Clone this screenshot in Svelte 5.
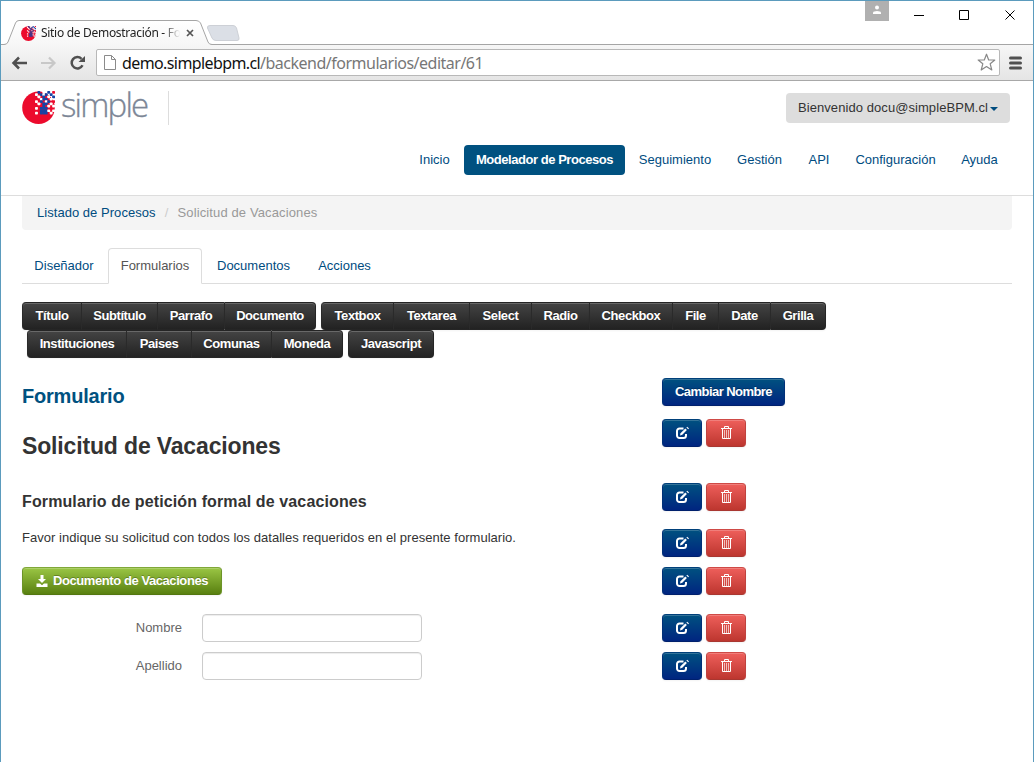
<script>
  let user = "docu@simpleBPM.cl";
  let nombre = $state("");
  let apellido = $state("");
  let activeTab = $state("Formularios");

  const menu = [
    { label: "Inicio", width: 55 },
    { label: "Modelador de Procesos", width: 161, active: true },
    { label: "Seguimiento", width: 96 },
    { label: "Gestión", width: 69 },
    { label: "API", width: 46 },
    { label: "Configuración", width: 103 },
    { label: "Ayuda", width: 61 },
  ];

  const tabs = [
    { label: "Diseñador", width: 84 },
    { label: "Formularios", width: 94 },
    { label: "Documentos", width: 99 },
    { label: "Acciones", width: 79 },
  ];

  const toolRows = [
    [
      [["Título", 59], ["Subtítulo", 76], ["Parrafo", 67], ["Documento", 92]],
      [["Textbox", 72], ["Textarea", 76], ["Select", 62], ["Radio", 58], ["Checkbox", 83], ["File", 46], ["Date", 52], ["Grilla", 56]],
    ],
    [
      [["Instituciones", 99], ["Paises", 65], ["Comunas", 80], ["Moneda", 72]],
      [["Javascript", 86]],
    ],
  ];

  // pixels that scatter off the globe, one letter per colour
  const pixels = [
    " b w b r",
    "w bwb b ",
    " w b w b",
    "  wbb w ",
    "w b wb r",
    " w bb w ",
    "   b w w",
    "w bbb  ",
    "  bbbw w",
    "w bbb w ",
  ];
  const pixelColors = { b: "#1644a5", r: "#ec0b2d", w: "#fff" };
</script>

{#snippet globe(size)}
  <svg width={size} height={size} viewBox="0 0 33 33">
    <circle cx="16.5" cy="16.7" r="16.3" fill="#ec0b2d" />
    <path d="M25 0H33V9L30.500 8L28 5L25 3Z" fill="#fff" />
    {#each pixels as line, y}
      {#each line.split("") as c, x}
        {#if c !== " "}
          <rect x={13 + x * 2.45} y={y * 2.3} width="2.9" height="2.7" rx="0.7" fill={pixelColors[c]} />
        {/if}
      {/each}
    {/each}
  </svg>
{/snippet}

{#snippet actions()}
  <div class="actions">
    <button class="btn primary icon" aria-label="Editar">
      <svg width="14" height="14" viewBox="0 0 14 14" fill="none">
        <path d="M8.500 2.500H4.500A2.500 2.500 0 0 0 2 5V9.500A2.500 2.500 0 0 0 4.500 12H8.500A2.500 2.500 0 0 0 11 9.500V8" stroke="#fff" stroke-width="2" />
        <path d="M5 9.500L5.500 7.200L10.300 2.400L11.900 4L7.300 8.700Z" fill="#fff" />
        <path d="M11.400 1.500L12.200 .7L14 2.500L13.200 3.300Z" fill="#fff" />
      </svg>
    </button>
    <button class="btn danger icon" aria-label="Eliminar">
      <svg width="14" height="14" viewBox="0 0 14 14" fill="none" stroke="#fff">
        <path d="M2 2.500H13M5.500 2V.5H9.500V2M3.500 3V12.500H11.500V3" />
        <path d="M5.500 4V12M7.500 4V12M9.500 4V12" opacity=".65" />
      </svg>
    </button>
  </div>
{/snippet}

<div class="window">
  <div class="titlebar">
    <div class="tab">
      <svg class="tab-shape" width="240" height="26" viewBox="0 0 240 26">
        <defs>
          <linearGradient id="tabfill" x1="0" y1="0" x2="0" y2="1">
            <stop offset="0" stop-color="#fff" />
            <stop offset="1" stop-color="#f6f6f6" />
          </linearGradient>
        </defs>
        <path d="M0 24.500H3Q6 24.500 7 22L14.500 3Q15.500 .5 18 .5H195Q198 .5 199.500 3L207 22Q208 24.500 211 24.500V26H0Z" fill="url(#tabfill)" />
        <path d="M0 24.500H3Q6 24.500 7 22L14.500 3Q15.500 .5 18 .5H195Q198 .5 199.500 3L207 22Q208 24.500 211 24.500H240" fill="none" stroke="#a5a5a5" />
        <path d="M209 5.500H232Q234.500 5.500 235.500 8L238 18Q238.500 20.500 236 20.500H215Q212 20.500 211 18L206.500 8Q206 5.500 209 5.500Z" fill="#dbdfe6" stroke="#cdd0d6" />
      </svg>
      {@render globe(15)}
      <span class="tab-title">Sitio de Demostración - Fo</span>
      <svg class="tab-close" width="8" height="8" viewBox="0 0 8 8"><path d="M1 1L7 7M7 1L1 7" stroke="#555" stroke-width="1.700" /></svg>
    </div>
    <div class="profile">
      <svg width="10" height="10" viewBox="0 0 10 10" fill="#fff"><circle cx="5" cy="2.500" r="2" /><path d="M1 9V7.500Q1.500 6 5 6T9 7.500V9Z" /></svg>
    </div>
    <svg class="controls" width="104" height="12" viewBox="0 0 104 12" fill="none" stroke="#000">
      <path d="M0 6.500H10M45.500 1.500H54.500V10.500H45.500ZM91.500 1.500L100.500 10.500M100.500 1.500L91.500 10.500" />
    </svg>
  </div>

  <div class="navbar">
    <svg width="80" height="20" viewBox="0 0 80 20" fill="none">
      <path d="M18 10H5M10 4.500L4.500 10L10 15.500" stroke="#505050" stroke-width="2.500" />
      <path d="M32 10H45M40 4.500L45.500 10L40 15.500" stroke="#c8c8c8" stroke-width="2.200" />
      <path d="M73.500 12.300A5.700 5.700 0 1 1 72.500 5.800" stroke="#505050" stroke-width="2.500" />
      <path d="M76 3V9H69.500Z" fill="#505050" />
    </svg>
    <div class="address">
      <svg width="12" height="16" viewBox="0 0 12 16" fill="#fff" stroke="#8b8b8b"><path d="M.5 .5H7.500L11.500 4.500V14.500H.5ZM7.500 .5V4.500H11.500" /></svg>
      <span class="url">demo.simplebpm.cl<span>/backend/formularios/editar/61</span></span>
      <svg width="19" height="19" viewBox="0 0 19 19" fill="#fff" stroke="#888"><path d="M9.500 1.200L11.700 7H17.800L13.200 10.800L14.800 17L9.500 13.500L4.200 17L5.800 10.800L1.200 7H7.300Z" stroke-width="1.200" stroke-linejoin="round" /></svg>
    </div>
    <svg width="13" height="14" viewBox="0 0 13 14" stroke="#505050" stroke-width="3" stroke-linecap="round"><path d="M1.500 2H11.500M1.500 7H11.500M1.500 12H11.500" /></svg>
  </div>

  <header>
    <div class="brand-row">
      <div class="brand">
        {@render globe(33)}
        <span class="wordmark">simple</span>
      </div>
      <button class="account"><span>Bienvenido {user}</span><i class="caret"></i></button>
    </div>
    <nav class="menu">
      {#each menu as item}
        <a href="#{item.label}" class:active={item.active} style:width="{item.width}px">{item.label}</a>
      {/each}
    </nav>
  </header>

  <main>
    <div class="breadcrumb">
      <a href="#procesos">Listado de Procesos</a>
      <span class="divider">/</span>
      <span class="current">Solicitud de Vacaciones</span>
    </div>

    <div class="tabs">
      {#each tabs as tab}
        <button class:active={tab.label === activeTab} style:width="{tab.width}px" onclick={() => (activeTab = tab.label)}>{tab.label}</button>
      {/each}
    </div>

    <div class="toolbar">
      {#each toolRows as row}
        <div class="tool-row">
          {#each row as group}
            <div class="btn-group">
              {#each group as [label, width]}
                <button class="btn inverse" style:width="{width}px">{label}</button>
              {/each}
            </div>
          {/each}
        </div>
      {/each}
    </div>

    <div class="row legend">
      <h2>Formulario</h2>
      <button class="btn primary rename">Cambiar Nombre</button>
    </div>
    <div class="row title">
      <h1>Solicitud de Vacaciones</h1>
      {@render actions()}
    </div>
    <div class="row subtitle">
      <h3>Formulario de petición formal de vacaciones</h3>
      {@render actions()}
    </div>
    <div class="row paragraph">
      <p>Favor indique su solicitud con todos los datalles requeridos en el presente formulario.</p>
      {@render actions()}
    </div>
    <div class="row document">
      <button class="btn success">
        <svg width="12" height="12" viewBox="0 0 12 12" fill="#fff"><path d="M4.500 0H7.500V4H10L6 8L2 4H4.500ZM.5 8.500H4L6 10.300L8 8.500H11.500V12H.5Z" /></svg>
        <span>Documento de Vacaciones</span>
      </button>
      {@render actions()}
    </div>
    <div class="row field">
      <label><span>Nombre</span><input type="text" bind:value={nombre} /></label>
      {@render actions()}
    </div>
    <div class="row field">
      <label><span>Apellido</span><input type="text" bind:value={apellido} /></label>
      {@render actions()}
    </div>
  </main>
</div>

<style>
  :global(body) {
    background: #fff;
    overflow: hidden;
  }
  .window {
    box-sizing: border-box;
    width: 1034px;
    height: 762px;
    border: 1px solid #5b9bbd;
    border-bottom: 0;
    font-family: "Liberation Sans", Arial, sans-serif;
    font-size: 13px;
    line-height: 18px;
    color: #333;
    overflow: hidden;
  }
  .window * {
    box-sizing: border-box;
  }
  svg {
    display: block;
    flex-shrink: 0;
  }
  button,
  input {
    font: inherit;
    margin: 0;
  }
  a {
    color: #004c7f;
    text-decoration: none;
  }

  .titlebar {
    display: flex;
    height: 44px;
    border-bottom: 1px solid #a5a5a5;
  }
  .tab {
    position: relative;
    display: flex;
    align-items: center;
    width: 240px;
    height: 26px;
    margin-top: 19px;
    padding-left: 20px;
  }
  .tab > :global(svg:not(.tab-shape)) {
    position: relative;
  }
  .tab-shape {
    position: absolute;
    left: 0;
    top: 0;
  }
  .tab-title {
    position: relative;
    width: 143px;
    margin-left: 5px;
    font: 12px/18px "Noto Sans", "Open Sans", sans-serif;
    letter-spacing: -0.3px;
    white-space: nowrap;
    color: #222;
    mask-image: linear-gradient(to right, #000 122px, transparent 139px);
  }
  .tab-close {
    margin-left: 2px;
  }
  .profile {
    display: flex;
    justify-content: center;
    width: 24px;
    height: 20px;
    margin-left: 624px;
    padding-top: 4px;
    background: #b0b0b0;
  }
  .controls {
    margin: 8px 0 0 25px;
  }
  .navbar {
    display: flex;
    align-items: center;
    height: 36px;
    padding: 0 10px 0 8px;
    background: linear-gradient(#f6f6f6, #e5e5e5);
    border-bottom: 1px solid #a8a8a8;
  }
  .address {
    display: flex;
    align-items: center;
    width: 904px;
    height: 27px;
    margin: 0 9px 0 7px;
    padding: 0 3px 0 7px;
    background: #fff;
    border: 1px solid #b8b8b8;
    border-radius: 2px;
  }
  .url {
    flex: 1;
    margin-left: 6px;
    font: 16px/22px "Noto Sans", "Open Sans", sans-serif;
    letter-spacing: -0.6px;
    color: #111;
  }
  .url span {
    letter-spacing: -0.5px;
    color: #777;
  }

  header {
    height: 115px;
    padding: 10px 21px 0;
    border-bottom: 1px solid #ddd;
  }
  .brand-row {
    display: flex;
    justify-content: space-between;
    height: 35px;
  }
  .brand {
    display: flex;
    width: 147px;
    height: 34px;
    border-right: 1px solid #ddd;
  }
  .wordmark {
    margin-left: 6px;
    font: 300 33px/28px "Open Sans", sans-serif;
    letter-spacing: -1.8px;
    color: #7c8696;
    -webkit-text-stroke: 0.3px #7c8696;
  }
  .account {
    display: flex;
    align-items: center;
    width: 224px;
    height: 30px;
    margin: 2px 2px 0 0;
    padding: 0 0 0 12px;
    border: 0;
    border-radius: 4px;
    background: #ddd;
    color: #333;
    letter-spacing: 0.07px;
    white-space: nowrap;
  }
  .caret {
    margin: 2px 0 0 2px;
    border: 4px solid transparent;
    border-top-color: #004c7f;
    border-bottom: 0;
  }
  .menu {
    display: flex;
    justify-content: flex-end;
    gap: 2px;
    margin-top: 19px;
    padding-right: 2px;
  }
  .menu a {
    height: 30px;
    border-radius: 4px;
    line-height: 29px;
    text-align: center;
    white-space: nowrap;
  }
  .menu a.active {
    background: #005180;
    color: #fff;
    font-weight: bold;
    letter-spacing: -0.46px;
  }

  main {
    padding: 0 21px;
  }
  .breadcrumb {
    display: flex;
    height: 34px;
    padding: 0 15px;
    border-radius: 0 0 4px 4px;
    background: #f4f4f4;
    line-height: 33px;
    letter-spacing: 0.04px;
    color: #999;
  }
  .breadcrumb .divider {
    width: 22px;
    text-align: center;
    color: #ccc;
  }
  .breadcrumb .current {
    letter-spacing: 0.12px;
  }
  .tabs {
    display: flex;
    gap: 2px;
    height: 36px;
    margin-top: 18px;
    border-bottom: 1px solid #ddd;
  }
  .tabs button {
    height: 36px;
    padding: 0;
    border: 1px solid transparent;
    border-radius: 4px 4px 0 0;
    background: none;
    color: #004c7f;
  }
  .tabs button.active {
    border-color: #ddd;
    border-bottom: 1px solid #fff;
    background: #fff;
    color: #555;
  }

  .toolbar {
    margin-top: 18px;
  }
  .tool-row {
    display: flex;
    gap: 5px;
  }
  .tool-row + .tool-row {
    margin-left: 5px;
  }
  .btn-group {
    display: flex;
  }
  .btn {
    display: flex;
    align-items: center;
    justify-content: center;
    height: 28px;
    padding: 0 0 1px;
    border: 1px solid;
    border-radius: 4px;
    color: #fff;
    font-weight: bold;
    letter-spacing: -0.42px;
    white-space: nowrap;
    text-shadow: 0 -1px 0 rgba(0, 0, 0, 0.25);
    box-shadow: inset 0 1px 0 rgba(255, 255, 255, 0.2), 0 1px 2px rgba(0, 0, 0, 0.05);
  }
  .inverse {
    background: linear-gradient(#444, #222);
    border-color: #252525;
    border-left-color: #2a2a2a;
    border-right-width: 0;
  }
  .btn-group .btn {
    border-radius: 0;
  }
  .btn-group .btn:first-child {
    border-radius: 4px 0 0 4px;
  }
  .btn-group .btn:last-child {
    border-right-width: 1px;
    border-radius: 0 4px 4px 0;
  }
  .btn-group .btn:only-child {
    border-radius: 4px;
  }
  .primary {
    background: linear-gradient(#005180, #002580);
    border-color: #00407a #003078 #00206c;
  }
  .danger {
    background: linear-gradient(#ee5f5b, #bd362f);
    border-color: #cf4a46 #c0423e #a93731;
  }
  .success {
    width: 200px;
    gap: 5px;
    background: linear-gradient(#9ac544, #598010);
    border-color: #80a838 #6c9428 #527610;
  }
  .icon {
    width: 40px;
    padding: 0;
  }
  .rename {
    width: 123px;
    letter-spacing: -0.55px;
  }

  .row {
    display: grid;
    grid-template-columns: 640px auto;
    justify-content: start;
    align-items: start;
  }
  .actions {
    display: flex;
    gap: 4px;
  }
  h1,
  h2,
  h3,
  p {
    margin: 0;
  }
  .legend {
    height: 41px;
    margin-top: 20px;
  }
  h2 {
    font-size: 20px;
    line-height: 36px;
    letter-spacing: -0.2px;
    color: #005180;
  }
  .title {
    height: 64px;
  }
  h1 {
    font-size: 23px;
    line-height: 54px;
    letter-spacing: -0.15px;
  }
  .subtitle {
    height: 46px;
  }
  h3 {
    font-size: 16px;
    line-height: 37px;
    letter-spacing: 0.12px;
  }
  .paragraph {
    height: 38px;
  }
  p {
    line-height: 18px;
    letter-spacing: 0.03px;
  }
  .document {
    height: 47px;
  }
  .field {
    height: 38px;
  }
  label {
    display: flex;
    gap: 20px;
    line-height: 28px;
    color: #666;
  }
  label span {
    width: 160px;
    text-align: right;
  }
  input {
    width: 220px;
    height: 28px;
    padding: 4px 6px;
    border: 1px solid #ccc;
    border-radius: 4px;
    background: #fff;
    box-shadow: inset 0 1px 1px rgba(0, 0, 0, 0.075);
  }
</style>
